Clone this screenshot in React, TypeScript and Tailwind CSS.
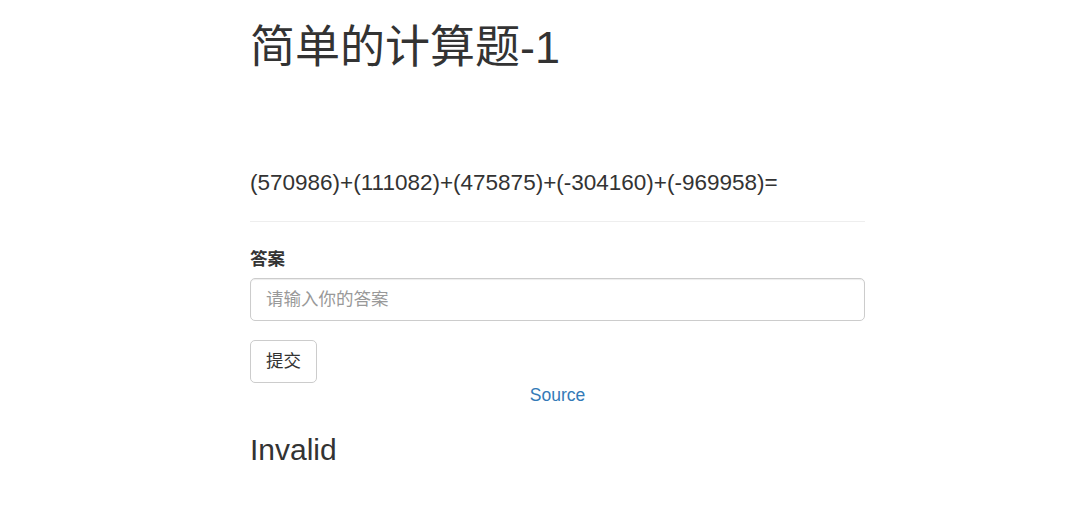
import { useState } from 'react';

const FONT = 'font-["Liberation_Sans","Noto_Sans_CJK_SC",sans-serif]';

export default function App() {
  const [answer, setAnswer] = useState('');

  return (
    <div className={`min-h-[526px] bg-white text-[#333] ${FONT}`}>
      <div className="ml-[250px] w-[615px] pb-10">
        <h1 className="mt-[23px] text-[45px] leading-[49.5px] font-normal">简单的计算题-1</h1>

        <h4 className="mt-[98.5px] text-[22.5px] leading-[24.75px] font-normal">
          (570986)+(111082)+(475875)+(-304160)+(-969958)=
        </h4>

        <hr className="mt-[25px] mb-[25px] border-0 border-t border-[#eee]" />

        <form onSubmit={(e) => e.preventDefault()}>
          <div className="mb-[19.75px]">
            <label className="inline-block mb-[6.25px] text-[17.5px] leading-[25px] font-bold">答案</label>
            <input
              type="text"
              value={answer}
              onChange={(e) => setAnswer(e.target.value)}
              placeholder="请输入你的答案"
              className="block w-full h-[42.5px] px-[15px] py-[7.5px] text-[17.5px] leading-[25px] text-[#555] bg-white border border-[#ccc] rounded-[5px] shadow-[inset_0_1px_1px_rgba(0,0,0,0.075)] outline-none placeholder:text-[#999]"
            />
          </div>
          <button
            type="submit"
            className="h-[42.5px] px-[15px] py-[7.5px] text-[17.5px] leading-[25px] text-[#333] bg-white border border-[#ccc] rounded-[5px]"
          >
            提交
          </button>
        </form>

        <div className="text-center text-[17.5px] leading-[25px]">
          <a href="#" className="text-[#337ab7] no-underline">Source</a>
        </div>

        <h3 className="mt-[25px] text-[30px] leading-[33px] font-normal">Invalid</h3>
      </div>
    </div>
  );
}
